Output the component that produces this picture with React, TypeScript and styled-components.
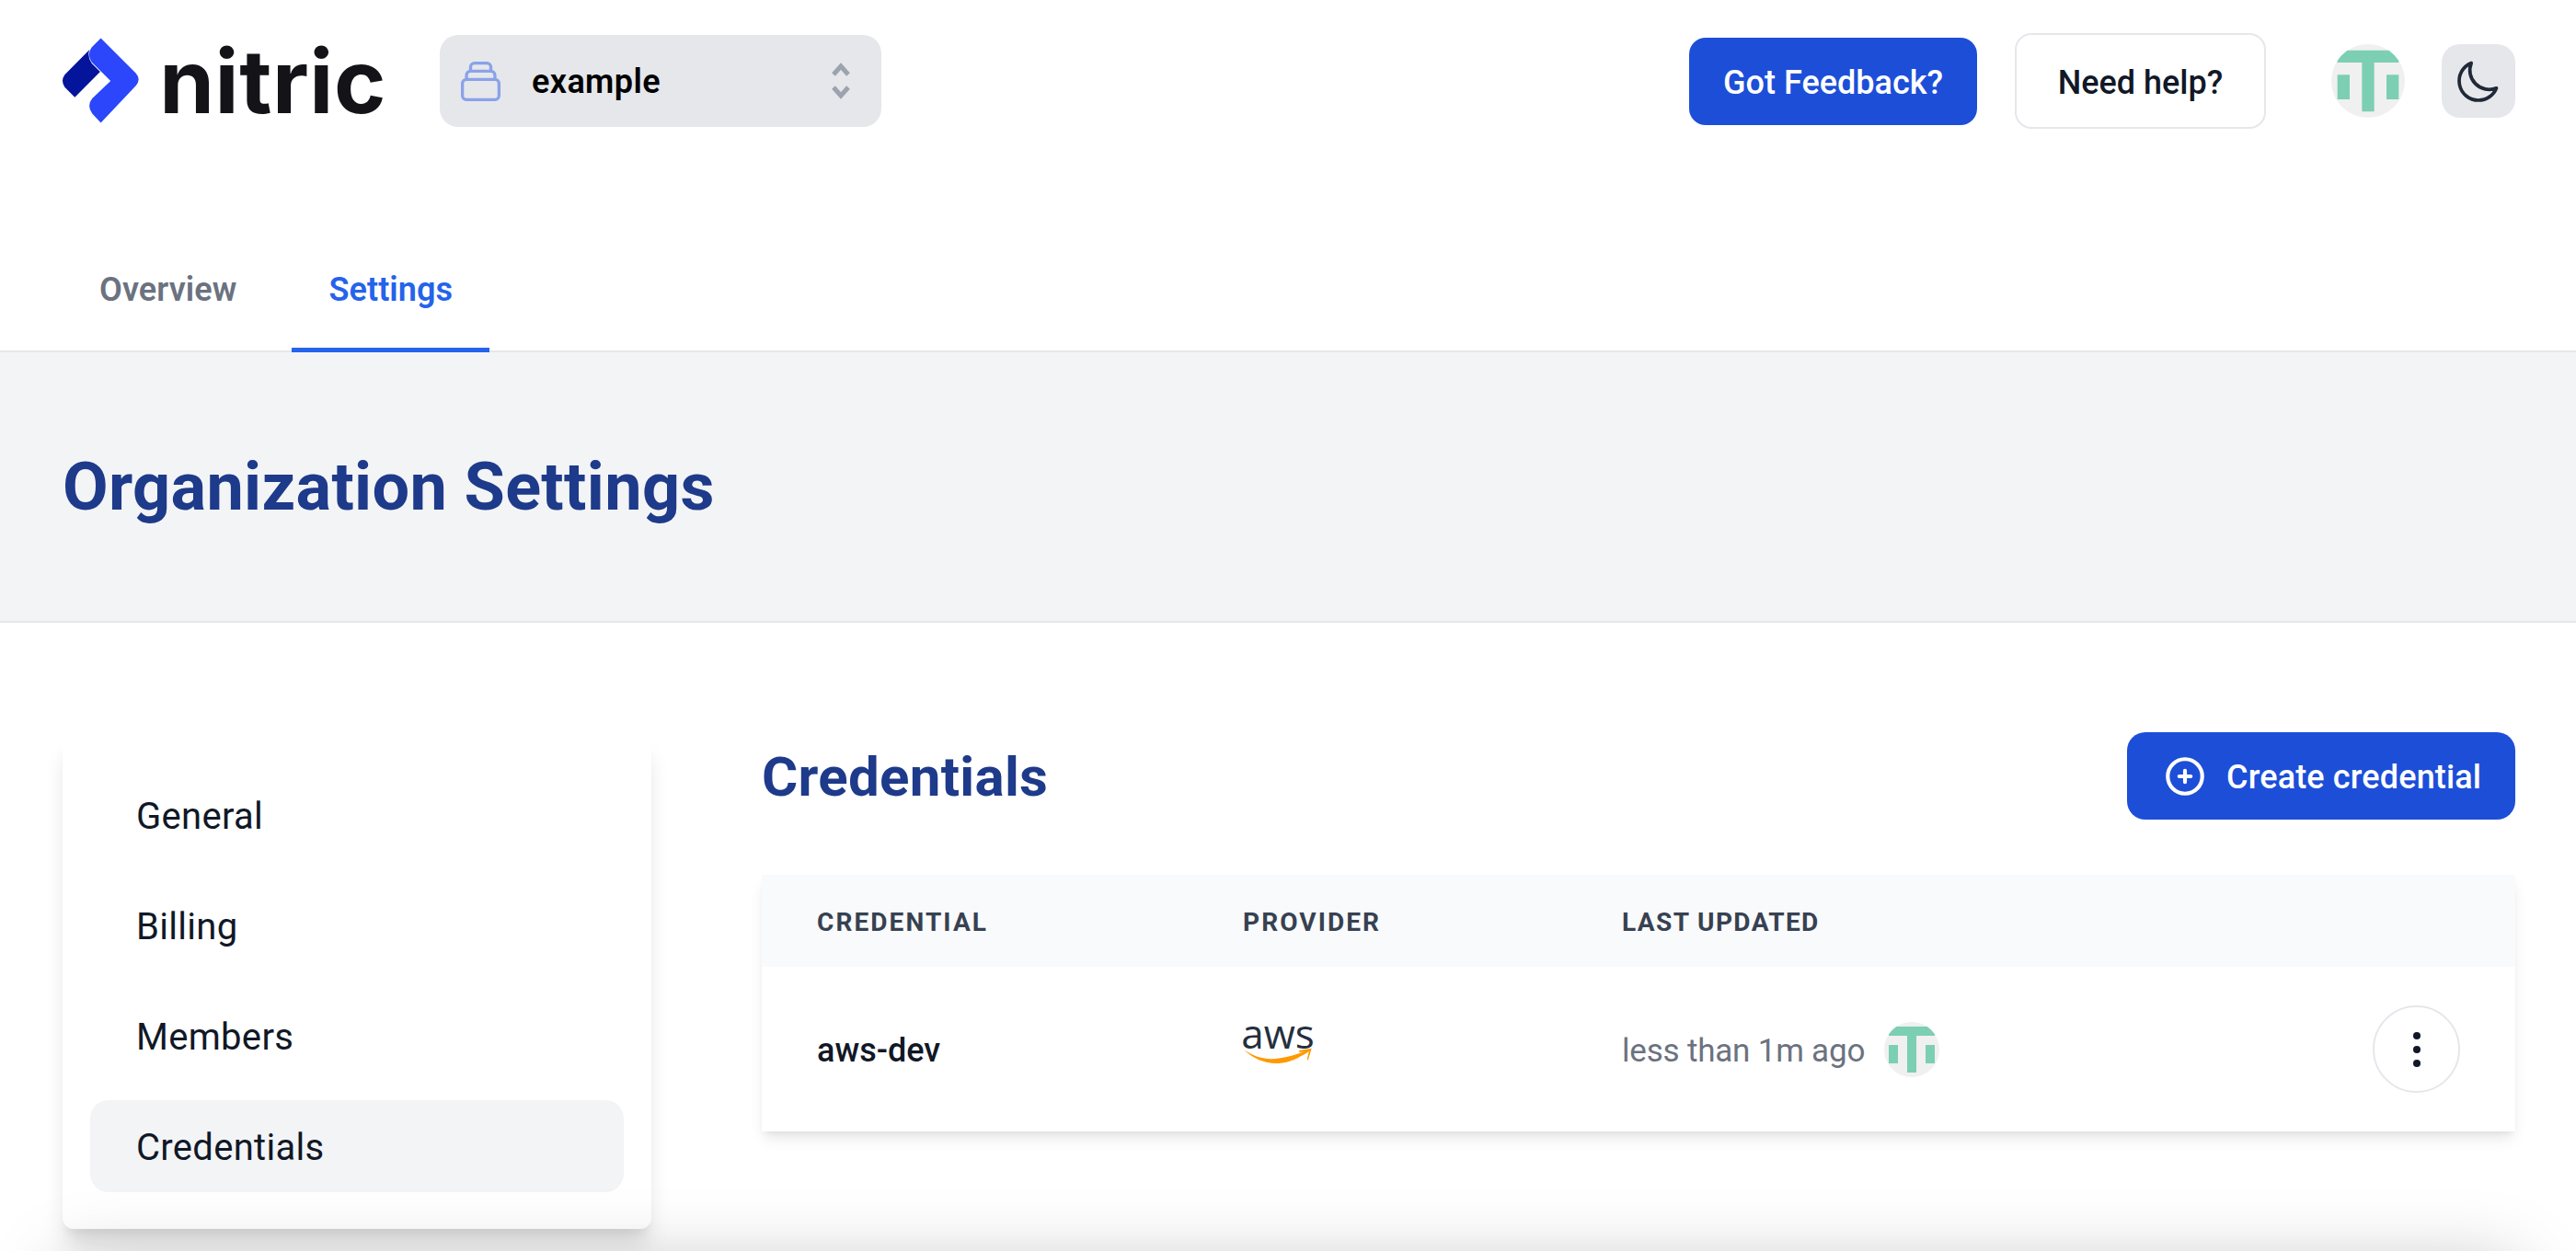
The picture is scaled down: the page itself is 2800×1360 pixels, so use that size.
import React from 'react'
import styled, { createGlobalStyle } from 'styled-components'

const GlobalStyle = createGlobalStyle`
  body {
    margin: 0;
    background: #fff;
    font-family: Roboto, "Liberation Sans", sans-serif;
    color: #111827;
  }
`

const Page = styled.div`
  height: 1360px;
  overflow: hidden;
`

const Header = styled.header`
  display: flex;
  align-items: center;
  height: 176px;
  padding: 0 66px 0 68px;
`

const Logo = styled.div`
  display: flex;
  align-items: center;
  width: 352px;
  gap: 22px;
`

const LogoWord = styled.span`
  font-family: Inter, sans-serif;
  font-size: 96px;
  font-weight: 700;
  line-height: 96px;
  letter-spacing: 0.6px;
  color: #131318;
`

const ProjectSelect = styled.div`
  display: flex;
  align-items: center;
  width: 480px;
  height: 100px;
  margin-left: 58px;
  padding: 0 32px 0 18px;
  box-sizing: border-box;
  border-radius: 20px;
  background: #e5e7eb;
`

const ProjectName = styled.span`
  flex: 1;
  margin-left: 29px;
  padding-top: 2px;
  font-size: 36px;
  font-weight: 600;
  letter-spacing: 0.4px;
  color: #000;
`

const HeaderActions = styled.div`
  display: flex;
  align-items: center;
  margin-left: auto;
`

const Button = styled.button<{ $outline?: boolean }>`
  display: flex;
  align-items: center;
  justify-content: center;
  height: ${(p) => (p.$outline ? '104px' : '95px')};
  width: ${(p) => (p.$outline ? '273px' : '313px')};
  margin-left: ${(p) => (p.$outline ? '41px' : '0')};
  padding: 3px 0 0;
  box-sizing: border-box;
  border: ${(p) => (p.$outline ? '2px solid #e5e7eb' : 'none')};
  border-radius: 18px;
  background: ${(p) => (p.$outline ? '#fff' : '#1d4ed8')};
  color: ${(p) => (p.$outline ? '#111827' : '#fff')};
  font-family: inherit;
  font-size: 36px;
  font-weight: 500;
`

const HeaderAvatar = styled.div`
  display: flex;
  margin: 0 40px 0 71px;
`

const ThemeToggle = styled.div`
  display: flex;
  align-items: center;
  justify-content: center;
  width: 80px;
  height: 80px;
  border-radius: 20px;
  background: #e5e7eb;
`

const TabBar = styled.nav`
  display: flex;
  gap: 20px;
  margin-top: 70px;
  padding-left: 68px;
  border-bottom: 2px solid #e5e7eb;
`

const Tab = styled.div<{ $active?: boolean }>`
  display: flex;
  align-items: center;
  height: 137px;
  margin-bottom: -2px;
  padding: 6px 40px 0;
  box-sizing: border-box;
  border-bottom: 5px solid ${(p) => (p.$active ? '#2563eb' : 'transparent')};
  color: ${(p) => (p.$active ? '#2563eb' : '#6b7280')};
  font-size: 36px;
  font-weight: 600;
  letter-spacing: 0.1px;
`

const TitleBand = styled.div`
  display: flex;
  align-items: center;
  height: 292px;
  padding-left: 68px;
  background: #f3f4f6;
  border-bottom: 2px solid #e5e7eb;
`

const PageTitle = styled.h1`
  margin: 0;
  font-size: 72px;
  font-weight: 700;
  letter-spacing: 0.35px;
  color: #1e3a8a;
`

const Content = styled.div`
  display: grid;
  grid-template-columns: 640px 1fr;
  gap: 120px;
  align-items: start;
  padding: 121px 66px 0 68px;
`

const SideNav = styled.aside`
  display: flex;
  flex-direction: column;
  gap: 20px;
  padding: 38px 30px 40px;
  border-radius: 12px;
  background: #fff;
  box-shadow: 0 20px 25px -5px rgba(0, 0, 0, 0.14), 0 10px 10px -5px rgba(0, 0, 0, 0.05);
`

const NavItem = styled.div<{ $active?: boolean }>`
  display: flex;
  align-items: center;
  height: 100px;
  padding: 2px 0 0 50px;
  box-sizing: border-box;
  border-radius: 20px;
  background: ${(p) => (p.$active ? '#f3f4f6' : 'transparent')};
  font-size: 40px;
  letter-spacing: 0.3px;
  color: #111827;
`

const Main = styled.main`
  display: flex;
  flex-direction: column;
  gap: 60px;
  margin-top: -2px;
`

const SectionHead = styled.div`
  display: flex;
  align-items: center;
  justify-content: space-between;
`

const SectionTitle = styled.h2`
  margin: 0;
  padding-top: 2px;
  font-size: 60px;
  font-weight: 700;
  letter-spacing: 0.3px;
  color: #1e3a8a;
`

const CreateButton = styled.button`
  display: flex;
  align-items: center;
  gap: 20px;
  width: 422px;
  height: 95px;
  padding: 0 0 0 38px;
  box-sizing: border-box;
  border: none;
  border-radius: 20px;
  background: #1d4ed8;
  color: #fff;
  font-family: inherit;
  font-size: 36px;
  font-weight: 500;
  letter-spacing: 0.15px;
`

const CreateLabel = styled.span`
  padding-top: 2px;
`

const Table = styled.div`
  background: #fff;
  box-shadow: 0 10px 15px -3px rgba(0, 0, 0, 0.1), 0 4px 6px -2px rgba(0, 0, 0, 0.05);
`

const Row = styled.div<{ $head?: boolean }>`
  display: grid;
  grid-template-columns: 463px 412px 1fr auto;
  align-items: center;
  height: ${(p) => (p.$head ? '100px' : '179px')};
  padding: 0 60px;
  background: ${(p) => (p.$head ? '#f9fafb' : '#fff')};
`

const HeadCell = styled.div<{ $tracking: number }>`
  padding-top: 2px;
  font-size: 28px;
  font-weight: 700;
  letter-spacing: ${(p) => p.$tracking}px;
  text-transform: uppercase;
  color: #374151;
`

const CredentialName = styled.div`
  padding-top: 2px;
  font-size: 36px;
  font-weight: 500;
  color: #111827;
`

const AwsLogo = styled.div`
  display: flex;
  flex-direction: column;
  align-items: center;
  width: 76px;
  margin-top: -14px;
`

const AwsWord = styled.span`
  font-family: "Open Sans", sans-serif;
  font-size: 44px;
  line-height: 32px;
  height: 32px;
  color: #252f3e;
`

const Updated = styled.div`
  display: flex;
  align-items: center;
  gap: 21px;
  font-size: 35px;
  letter-spacing: -0.2px;
  color: #6b7280;
`

const UpdatedLabel = styled.span`
  padding-top: 3px;
`

const MenuButton = styled.div`
  display: flex;
  align-items: center;
  justify-content: center;
  width: 95px;
  height: 95px;
  box-sizing: border-box;
  border: 2px solid #e5e7eb;
  border-radius: 50%;
`

// card below the fold, only its shadow shows at the bottom of the page
const NextCard = styled.div`
  position: relative;
  z-index: 1;
  height: 120px;
  margin: 40px 66px 0 68px;
  background: #fff;
  box-shadow: 0 0 80px rgba(0, 0, 0, 0.25);
`

const LogoMark = () => (
  <svg width="84" height="94" viewBox="55 65 250 280">
    <path fill="#04149b" d="M143 103L62 185Q48 205 62 225L95 258L178 175L150 147Q135 125 143 103Z" />
    <path fill="#2b46fb" d="M180 65L295 180Q312 200 295 220L180 342L152 312Q133 285 152 262L212 205L150 143Q133 118 150 95Z" />
  </svg>
)

const Identicon = ({ size }: { size: number }) => (
  <svg width={size} height={size} viewBox="0 0 240 240">
    <clipPath id={`identicon-${size}`}>
      <circle cx="120" cy="120" r="120" />
    </clipPath>
    <g clipPath={`url(#identicon-${size})`}>
      <rect width="240" height="240" fill="#f0f0f0" />
      <path fill="#7ccfb2" d="M20 20H220V60H140V220H100V60H20ZM20 100H60V180H20ZM180 100H220V180H180Z" />
    </g>
  </svg>
)

const CollectionIcon = () => (
  <svg width="53" height="53" viewBox="0 0 24 24" fill="none" stroke="#8aa2e8" strokeWidth="1.5" strokeLinecap="round" strokeLinejoin="round">
    <path d="M19 11H5m14 0a2 2 0 012 2v6a2 2 0 01-2 2H5a2 2 0 01-2-2v-6a2 2 0 012-2m14 0V9a2 2 0 00-2-2M5 11V9a2 2 0 012-2m0 0V5a2 2 0 012-2h6a2 2 0 012 2v2M7 7h10" />
  </svg>
)

const SelectorIcon = () => (
  <svg width="24" height="40" viewBox="0 0 24 40" fill="none" stroke="#9ca3af" strokeWidth="5">
    <path d="M4 13L12 4L20 13M4 27L12 36L20 27" />
  </svg>
)

const MoonIcon = () => (
  <svg width="56" height="56" viewBox="0 0 24 24" fill="none" stroke="#1f2937" strokeWidth="1.6" strokeLinecap="round" strokeLinejoin="round">
    <path d="M20.354 15.354A9 9 0 018.646 3.646 9.003 9.003 0 0012 21a9.003 9.003 0 008.354-5.646z" />
  </svg>
)

const PlusCircleIcon = () => (
  <svg width="50" height="50" viewBox="0 0 24 24" fill="none" stroke="#fff" strokeWidth="2" strokeLinecap="round" strokeLinejoin="round">
    <path d="M12 9v3m0 0v3m0-3h3m-3 0H9m12 0a9 9 0 11-18 0 9 9 0 0118 0z" />
  </svg>
)

const DotsIcon = () => (
  <svg width="10" height="40" viewBox="0 0 10 40" fill="#111827">
    <circle cx="5" cy="5" r="4" />
    <circle cx="5" cy="20" r="4" />
    <circle cx="5" cy="35" r="4" />
  </svg>
)

const AwsSwoosh = () => (
  <svg width="76" height="21" viewBox="30 118 232 64">
    <path fill="#ff9900" d="M33 124C70 150 110 160 150 153C185 148 215 138 245 126L247 132C215 152 185 168 148 170C105 172 65 155 33 124Z" />
    <path fill="#ff9900" d="M216 127L258 120L246 160L243 156L249 130L218 133Z" />
  </svg>
)

const navItems = ['General', 'Billing', 'Members', 'Credentials']

export default function App(): JSX.Element {
  return (
    <Page>
      <GlobalStyle />
      <Header>
        <Logo>
          <LogoMark />
          <LogoWord>nitric</LogoWord>
        </Logo>
        <ProjectSelect>
          <CollectionIcon />
          <ProjectName>example</ProjectName>
          <SelectorIcon />
        </ProjectSelect>
        <HeaderActions>
          <Button>Got Feedback?</Button>
          <Button $outline>Need help?</Button>
          <HeaderAvatar>
            <Identicon size={80} />
          </HeaderAvatar>
          <ThemeToggle>
            <MoonIcon />
          </ThemeToggle>
        </HeaderActions>
      </Header>
      <TabBar>
        <Tab>Overview</Tab>
        <Tab $active>Settings</Tab>
      </TabBar>
      <TitleBand>
        <PageTitle>Organization Settings</PageTitle>
      </TitleBand>
      <Content>
        <SideNav>
          {navItems.map((item) => (
            <NavItem key={item} $active={item === 'Credentials'}>{item}</NavItem>
          ))}
        </SideNav>
        <Main>
          <SectionHead>
            <SectionTitle>Credentials</SectionTitle>
            <CreateButton>
              <PlusCircleIcon />
              <CreateLabel>Create credential</CreateLabel>
            </CreateButton>
          </SectionHead>
          <Table>
            <Row $head>
              <HeadCell $tracking={2.1}>Credential</HeadCell>
              <HeadCell $tracking={2.1}>Provider</HeadCell>
              <HeadCell $tracking={1.4}>Last updated</HeadCell>
            </Row>
            <Row>
              <CredentialName>aws-dev</CredentialName>
              <AwsLogo>
                <AwsWord>aws</AwsWord>
                <AwsSwoosh />
              </AwsLogo>
              <Updated>
                <UpdatedLabel>less than 1m ago</UpdatedLabel>
                <Identicon size={60} />
              </Updated>
              <MenuButton>
                <DotsIcon />
              </MenuButton>
            </Row>
          </Table>
        </Main>
      </Content>
      <NextCard />
    </Page>
  )
}
